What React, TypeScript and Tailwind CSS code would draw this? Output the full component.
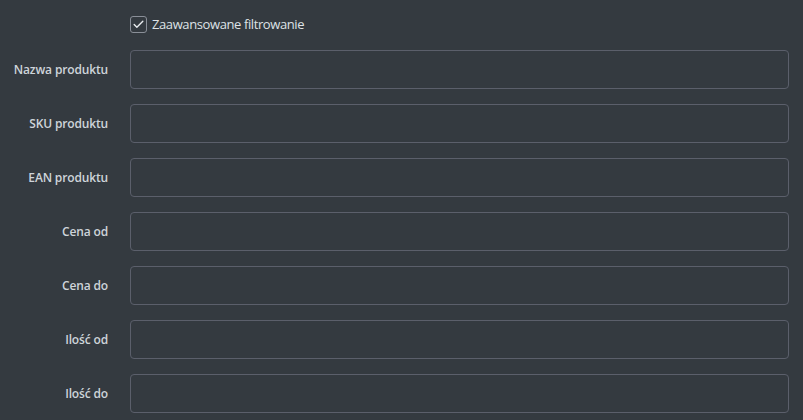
import { Check } from 'lucide-react';

const fields = [
    'Nazwa produktu',
    'SKU produktu',
    'EAN produktu',
    'Cena od',
    'Cena do',
    'Ilość od',
    'Ilość do'
];

export default function App() {
    return (
        <div
            className="min-h-screen w-full bg-[#343a40] text-[#dee2e6]"
            style={{ fontFamily: '"Open Sans", "Noto Sans", sans-serif' }}
        >
            <div className="pt-[16px] pl-[130px] flex items-center gap-[5px] h-[17px] box-content">
                <span className="w-[17px] h-[17px] rounded-[3px] border border-[#8a8f98] flex items-center justify-center">
                    <Check size={13} strokeWidth={2.5} className="text-[#e9ecef]" />
                </span>
                <span className="text-[13px] tracking-[-0.4px]">Zaawansowane filtrowanie</span>
            </div>
            <div className="pt-[17px] pr-[14px] flex flex-col gap-[15px]">
                {fields.map((f) => (
                    <div key={f} className="flex items-center">
                        <label className="w-[108px] text-right text-[12px] font-semibold text-[#ced4da] tracking-[-0.15px]">
                            {f}
                        </label>
                        <input
                            type="text"
                            className="ml-[22px] flex-1 h-[39px] rounded-[4px] border border-[#5b5f6b] bg-transparent outline-none"
                        />
                    </div>
                ))}
            </div>
        </div>
    );
}
